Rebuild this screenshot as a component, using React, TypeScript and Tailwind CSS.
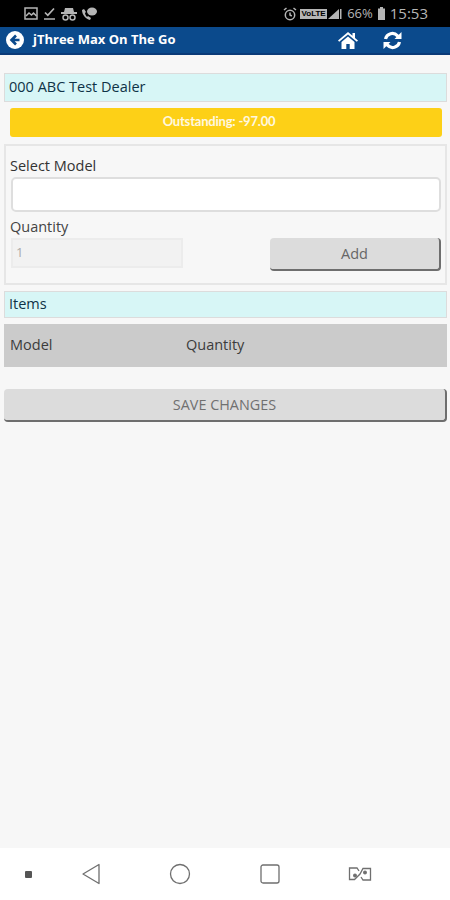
const font = { sans: "font-['Open_Sans',sans-serif]" };

function StatusBar() {
  return (
    <div className="flex h-[27px] items-center justify-between bg-black pl-6 pr-[22px] text-[#b5b5b5]">
      <div className="flex items-center gap-[6px]">
        <svg width="14" height="13" viewBox="0 0 14 13" fill="none" stroke="currentColor" strokeWidth="1.5">
          <rect x="1" y="1" width="12" height="11" />
          <path d="M2 9l3-3 2.5 2 2-2 3 3" />
        </svg>
        <svg width="11" height="13" viewBox="0 0 11 13" fill="none" stroke="currentColor" strokeWidth="1.7">
          <path d="M1 5.500l2.800 2.800L10 1.500M0 12h11" />
        </svg>
        <svg width="16" height="14" viewBox="0 0 16 14" fill="currentColor">
          <path d="M4 1h8l1 4H3z" />
          <rect x="0" y="5" width="16" height="2" />
          <circle cx="4.500" cy="10.500" r="2.500" fill="none" stroke="currentColor" strokeWidth="1.5" />
          <circle cx="11.500" cy="10.500" r="2.500" fill="none" stroke="currentColor" strokeWidth="1.5" />
        </svg>
        <svg width="16" height="14" viewBox="0 0 16 14" fill="currentColor" className="-ml-[2px]">
          <ellipse cx="11" cy="4.500" rx="5" ry="4" />
          <path d="M1 3c0 5 4 9 8 10l1-2-3-2-1 1c-1-1-2-3-2-4l1-1-2-3z" />
        </svg>
      </div>
      <div className="flex items-center">
        <svg width="14" height="14" viewBox="0 0 14 14" fill="none" stroke="currentColor" strokeWidth="1.5" className="mr-[3px]">
          <circle cx="7" cy="8" r="4.700" />
          <path d="M7 5.500V8l1.800 1M1 3l2.500-2M13 3l-2.500-2" />
        </svg>
        <span className="flex h-[10px] w-[27px] items-center justify-center bg-[#b5b5b5] font-['Liberation_Sans',sans-serif] text-[8px] font-bold leading-none text-black">
          VoLTE
        </span>
        <svg width="15" height="14" viewBox="0 0 15 14" fill="currentColor" className="mr-[5px]">
          <path d="M12 2v10H1z" />
          <rect x="13" y="2" width="1.500" height="10" />
        </svg>
        <span className={`${font.sans} mr-[5px] text-[13px] font-medium leading-none`}>66%</span>
        <svg width="7" height="13" viewBox="0 0 7 13" fill="currentColor" className="mr-[5px]">
          <rect x="2" y="0" width="3" height="2" />
          <rect x="0" y="1.500" width="7" height="11.500" />
        </svg>
        <span className={`${font.sans} text-[15px] leading-none`}>15:53</span>
      </div>
    </div>
  );
}

function AppHeader() {
  return (
    <div className="flex h-[28px] items-center border-b-2 border-[#0a3a78] bg-[#0b4a8c] pl-[6px] text-white">
      <svg width="18" height="18" viewBox="0 0 18 18" className="mr-[9px]">
        <circle cx="9" cy="9" r="9" fill="#ffffff" />
        <path d="M10 4.500L5.500 9l4.500 4.500M6 9h7.500" fill="none" stroke="#0b4a8c" strokeWidth="2.600" />
      </svg>
      <span className={`${font.sans} flex-1 text-[13px] font-bold`}>jThree Max On The Go</span>
      <svg width="20" height="17" viewBox="0 0 20 17" fill="#ffffff" className="mr-[25px]">
        <path d="M10 0L0 8.500l1.200 1.300L10 2.500l8.800 7.300L20 8.500l-3-2.600V1h-2.500v2.800z" />
        <path d="M3.500 10L10 4.500l6.500 5.500v7H11.700v-5H8.300v5H3.500z" />
      </svg>
      <svg width="19" height="19" viewBox="0 0 19 19" fill="none" stroke="#ffffff" strokeWidth="3.200" className="mr-[48px]">
        <path d="M2.500 8a7 7 0 0 1 12-3.200L16 6.500" />
        <path d="M16.500 11a7 7 0 0 1-12 3.200L3 12.500" />
        <path d="M18.500 1v7h-7z" fill="#ffffff" stroke="none" />
        <path d="M0.500 18v-7h7z" fill="#ffffff" stroke="none" />
      </svg>
    </div>
  );
}

function InfoBar({ label, className }: { label: string; className: string }) {
  return (
    <div className={`${className} ml-1 mr-[3px] flex items-center border border-[#dcdcdc] bg-[#d7f6f6] pl-1 text-[14.5px] leading-none text-[#0f3347]`}>
      {label}
    </div>
  );
}

function NavBar() {
  return (
    <div className="flex h-[52px] items-center bg-white text-[#6f6f6f]">
      <div className="ml-[25px] size-[7px] rounded-[1px] bg-[#555555]" />
      <svg width="20" height="22" viewBox="0 0 20 22" fill="none" stroke="currentColor" strokeWidth="1.300" className="ml-[49px]">
        <path d="M18 1.500v19L2 11z" strokeLinejoin="round" />
      </svg>
      <svg width="22" height="22" viewBox="0 0 22 22" fill="none" stroke="currentColor" strokeWidth="1.300" className="ml-[68px]">
        <circle cx="11" cy="11" r="9.500" />
      </svg>
      <svg width="20" height="20" viewBox="0 0 20 20" fill="none" stroke="currentColor" strokeWidth="1.300" className="ml-[69px]">
        <rect x="1" y="1" width="18" height="18" rx="2" />
      </svg>
      <svg width="24" height="16" viewBox="0 0 24 16" fill="none" stroke="currentColor" strokeWidth="1.300" className="ml-[68px]">
        <path d="M11 5L9 2H1.500V13.500H6.500L12 8L15 2.500H22.500V14H15L13 11" />
        <circle cx="7" cy="9.500" r="1.300" fill="currentColor" />
        <circle cx="17" cy="6.500" r="1.300" fill="currentColor" />
      </svg>
    </div>
  );
}

export default function App() {
  return (
    <div className={`${font.sans} flex h-[900px] w-[450px] flex-col overflow-hidden bg-[#f7f7f7]`}>
      <StatusBar />
      <AppHeader />

      <div className="flex flex-1 flex-col pt-[18px]">
        <InfoBar label="000 ABC Test Dealer" className="h-[29px] pb-[1px]" />

        <div className="ml-[10px] mr-[8px] mt-[6px] flex h-[29px] items-center justify-center rounded-[3px] bg-[#fdd017] pb-[2px] pr-[14px] font-['Lato',sans-serif] text-[13px] font-bold tracking-[-0.2px] text-[#fff8e0]">
          Outstanding: -97.00
        </div>

        <div className="ml-1 mr-[3px] mt-[7px] h-[141px] border-2 border-[#e6e6e6] pl-[5px] pr-[4px] pt-[10px] text-[14.5px] text-[#333333]">
          <div className="-ml-[1px] leading-[20px]">Select Model</div>
          <div className="mt-[1px] h-[35px] rounded-[5px] border-2 border-[#dedede] bg-white" />
          <div className="-ml-[1px] mt-[5px] leading-[20px] text-[#444444]">Quantity</div>
          <div className="mt-[1px] flex items-start justify-between">
            <div className="flex h-[30px] w-[172px] items-center border-2 border-[#ececec] bg-[#f2f2f2] pl-[3px] text-[13px] text-[#aaaaaa]">
              1
            </div>
            <button className="h-[33px] w-[171px] rounded-[4px] border-r-2 border-b-2 border-[#6e6e6e] bg-[#dcdcdc] text-[14.5px] text-[#666666]">
              Add
            </button>
          </div>
        </div>

        <InfoBar label="Items" className="mt-[6px] h-[27px] pb-[1px]" />

        <div className="ml-1 mr-[3px] mt-[6px] flex h-[43px] items-center bg-[#cbcbcb] pb-[1px] text-[14.5px] text-[#3c3c3c]">
          <div className="w-[182px] pl-[6px]">Model</div>
          <div>Quantity</div>
        </div>

        <button className="ml-1 mr-[3px] mt-[22px] h-[33px] rounded-[4px] border-r-2 border-b-2 border-[#6e6e6e] bg-[#dcdcdc] text-[14.4px] text-[#707070]">
          SAVE CHANGES
        </button>
      </div>

      <NavBar />
    </div>
  );
}
